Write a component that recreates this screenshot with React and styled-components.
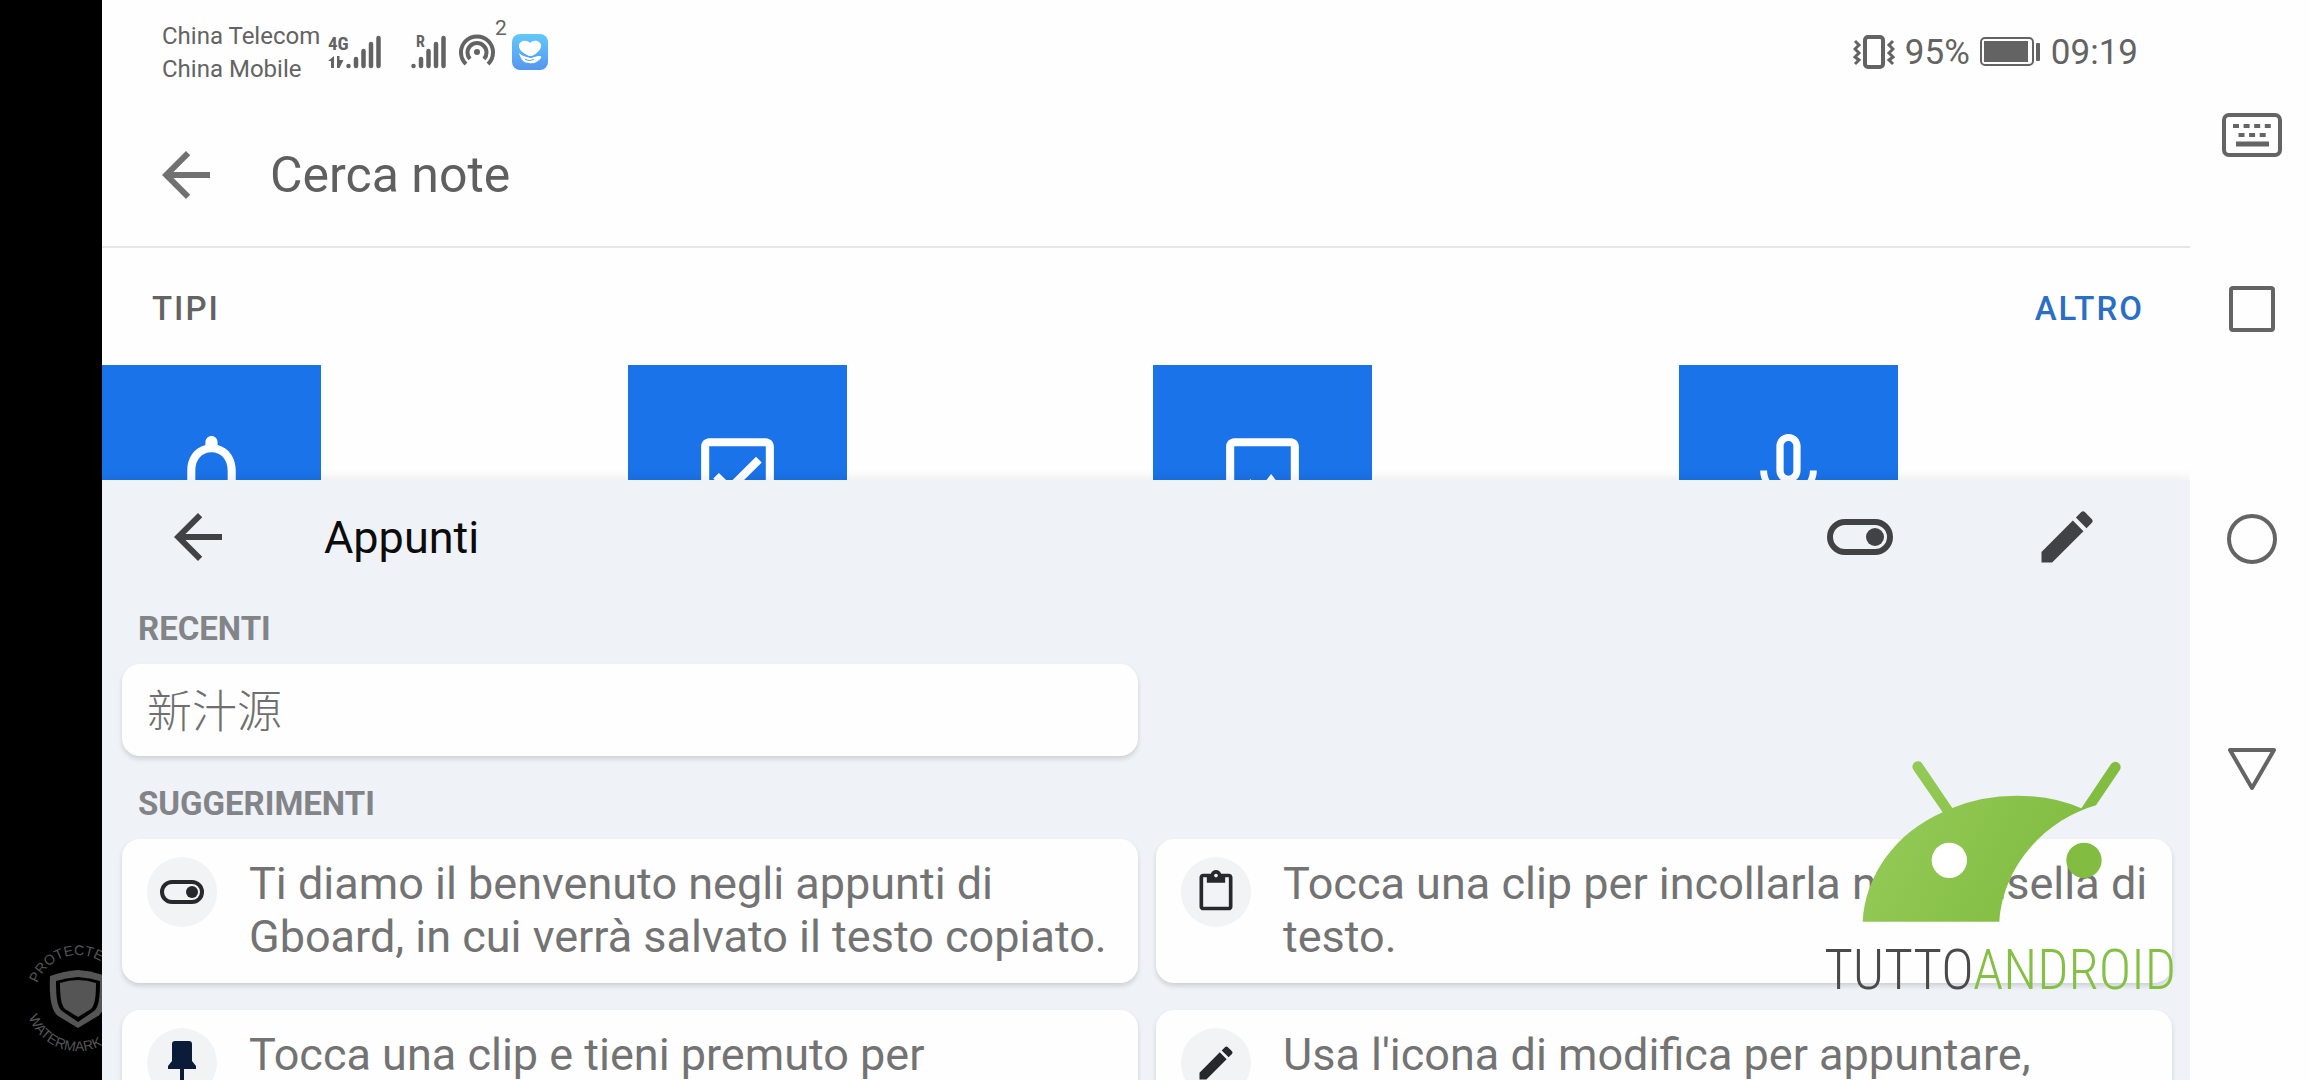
import React from "react"
import styled, { createGlobalStyle } from "styled-components"
import {
    MdArrowBack,
    MdContentPaste,
    MdEdit,
    MdMicNone,
    MdNotificationsNone,
    MdOutlineCheckBox,
    MdOutlineImage,
} from "react-icons/md"

const types = [
    { label: "Promemoria", Icon: MdNotificationsNone },
    { label: "Elenchi", Icon: MdOutlineCheckBox },
    { label: "Immagini", Icon: MdOutlineImage },
    { label: "Voce", Icon: MdMicNone },
]

const ToggleIcon = ({ width, height }) => (
    <svg width={width} height={height} viewBox="0 0 66 36" aria-hidden="true">
        <rect x="3" y="3" width="60" height="30" rx="15" fill="none" stroke="currentColor" strokeWidth="6" />
        <circle cx="48" cy="18" r="9" fill="currentColor" />
    </svg>
)

const PinIcon = () => (
    <svg width="28" height="44" viewBox="0 0 28 44" aria-hidden="true">
        <path d="M7 0h14q3 0 3 3v17l4 5v3H16v13l-2 3-2-3V28H0v-3l4-5V3q0-3 3-3z" fill="#0b1c38" />
    </svg>
)

const suggestions = [
    { icon: <ToggleIcon width={44} height={24} />, text: "Ti diamo il benvenuto negli appunti di Gboard, in cui verrà salvato il testo copiato." },
    { icon: <MdContentPaste size={44} />, text: "Tocca una clip per incollarla nella casella di testo." },
    { icon: <PinIcon />, text: "Tocca una clip e tieni premuto per aggiungerla." },
    { icon: <MdEdit size={44} />, text: "Usa l'icona di modifica per appuntare, aggiungere o eliminare le clip." },
]

const SignalBars = () => (
    <g fill="none" stroke="currentColor" strokeWidth="4.500" strokeLinecap="round">
        <path d="M2.500 31v.1M10 24v7M17.500 16v15M25 9v22M32.500 3v28" />
    </g>
)

const Signal4G = () => (
    <svg width="55" height="34" viewBox="0 0 55 34" aria-hidden="true">
        <SvgLabel x="0" y="15" fontSize="19">4G</SvgLabel>
        <path d="M0 26l6-5v12H3v-7zM9 21h2.500v4h4l-4 8H9z" fill="currentColor" />
        <g transform="translate(18 0)"><SignalBars /></g>
    </svg>
)

const SignalRoaming = () => (
    <svg width="36" height="34" viewBox="0 0 36 34" aria-hidden="true">
        <SvgLabel x="5" y="12" fontSize="16">R</SvgLabel>
        <SignalBars />
    </svg>
)

const HotspotIcon = () => (
    <svg width="36" height="36" viewBox="0 0 36 36" aria-hidden="true">
        <circle cx="18" cy="18" r="3" fill="currentColor" />
        <path d="M11 25a9.500 9.500 0 1 1 14 0M7 30a16 16 0 1 1 22 0" fill="none" stroke="currentColor" strokeWidth="4" />
    </svg>
)

const HealthIcon = () => (
    <svg width="36" height="36" viewBox="0 0 36 36" aria-hidden="true">
        <defs>
            <linearGradient id="health" x1="0" y1="0" x2="0" y2="1">
                <stop offset="0" stopColor="#62c8fa" />
                <stop offset="1" stopColor="#5596ee" />
            </linearGradient>
        </defs>
        <rect width="36" height="36" rx="8" fill="url(#health)" />
        <path d="M17 22C11 19 7 16 7 12c0-5 7-7 11-3 4-4 11-2 11 3 0 4-5 8-9 10z" fill="#fff" />
        <path d="M7 19c3 3 8 4 12 5l7-2c2 0 4 0 3 2-3 4-7 6-12 5-5 0-8-3-10-10z" fill="#fff" />
        <path d="M8 19c3 3 7 3 10 4l4-1M13 25c3 2 6 2 9 0" fill="none" stroke="#5aa2f1" strokeWidth="1" />
    </svg>
)

const VibrateIcon = () => (
    <svg width="42" height="34" viewBox="0 0 42 34" fill="none" stroke="currentColor" aria-hidden="true">
        <rect x="12" y="2" width="18" height="30" rx="3" strokeWidth="4" />
        <path d="M2 6l4 4-4 4 4 4-4 4 4 3-4 4M40 6l-4 4 4 4-4 4 4 4-4 3 4 4" strokeWidth="3" />
    </svg>
)

const BatteryIcon = () => (
    <svg width="61" height="30" viewBox="0 0 61 30" aria-hidden="true">
        <rect x="1" y="1" width="52" height="27" rx="4" fill="none" stroke="currentColor" strokeWidth="2" />
        <rect x="4" y="4" width="44" height="21" fill="currentColor" />
        <rect x="56" y="6" width="4" height="18" rx="1" fill="currentColor" />
    </svg>
)

const KeyboardIcon = () => (
    <svg width="60" height="44" viewBox="0 0 60 44" aria-hidden="true">
        <rect x="2" y="2" width="56" height="40" rx="5" fill="none" stroke="currentColor" strokeWidth="4" />
        <path d="M11 13h38" stroke="currentColor" strokeWidth="4" strokeDasharray="6 4.600" />
        <path d="M16.500 22h28" stroke="currentColor" strokeWidth="4" strokeDasharray="6 4.600" />
        <path d="M14 31h33" stroke="currentColor" strokeWidth="5" />
    </svg>
)

const ShieldMark = () => (
    <svg width="108" height="108" viewBox="0 0 108 108" aria-hidden="true">
        <defs>
            <path id="arcTop" d="M13.600 39.300A43 43 0 0 1 94.400 39.300" />
            <path id="arcBottom" d="M4.500 73.100A53 53 0 0 0 103.500 73.100" />
        </defs>
        <path d="M54 26q14 1 28 6c1 20-1 35-8 40L54 84 34 72c-7-5-9-20-8-40q14-5 28-6z" fill="#555" />
        <path d="M54 33q12 1 22 4c0 16-1 26-6 30L54 78 38 67c-5-4-6-14-6-30q10-3 22-4z" fill="#000" />
        <path d="M54 36q9 0 18 3c0 13-1 22-5 26L54 73 41 65c-4-4-5-13-5-26q9-3 18-3z" fill="#555" />
        <RingText><textPath href="#arcTop">PROTECTED</textPath></RingText>
        <RingText><textPath href="#arcBottom">WATERMARK</textPath></RingText>
    </svg>
)

const RobotHead = () => (
    <RobotSvg width="260" height="161" viewBox="256 61 780 483" aria-hidden="true">
        <defs>
            <linearGradient id="leaf" gradientUnits="userSpaceOnUse" x1="340" y1="240" x2="800" y2="480">
                <stop offset="0" stopColor="#93c956" />
                <stop offset="1" stopColor="#82bd42" />
            </linearGradient>
        </defs>
        <path
            fill="url(#leaf)"
            d="M258 543C266 400 360 275 498 215L410 87A16 16 0 0 1 437 69L527 202Q615 165 720 165Q830 165 914 203L1003 70A16 16 0 0 1 1030 87L958 194C800 240 678 380 668 543Z"
        />
        <circle cx="518" cy="359" r="53" fill="#fff" />
        <circle cx="922" cy="359" r="53" fill="#82bd42" />
    </RobotSvg>
)

const App = () => {
    return (
        <>
            <GlobalStyle />
            <Screen>
                <Notch><ShieldMark /></Notch>
                <Main>
                    <StatusBar>
                        <Carriers>
                            <span>China Telecom</span>
                            <span>China Mobile</span>
                        </Carriers>
                        <StatusIcons>
                            <Signal4G />
                            <Roaming><SignalRoaming /></Roaming>
                            <HotspotIcon />
                            <Devices>2</Devices>
                            <HealthIcon />
                        </StatusIcons>
                        <StatusRight>
                            <VibrateIcon />
                            <span>95%</span>
                            <BatteryIcon />
                            <span>09:19</span>
                        </StatusRight>
                    </StatusBar>
                    <SearchBar>
                        <IconButton aria-label="Indietro" $color="#717171"><MdArrowBack size={72} /></IconButton>
                        <SearchInput type="text" aria-label="Cerca note" placeholder="Cerca note" />
                    </SearchBar>
                    <TypesHeader>
                        <TypesTitle>TIPI</TypesTitle>
                        <MoreLink href="#altro">ALTRO</MoreLink>
                    </TypesHeader>
                    <TypesRow>
                        {types.map(({ label, Icon }) => (
                            <TypeTile key={label} aria-label={label}><Icon size={97} /></TypeTile>
                        ))}
                    </TypesRow>
                    <Clipboard>
                        <ClipboardBar>
                            <IconButton aria-label="Chiudi appunti"><MdArrowBack size={72} /></IconButton>
                            <ClipboardTitle>Appunti</ClipboardTitle>
                            <ClipboardActions>
                                <IconButton aria-label="Attiva appunti"><ToggleIcon width={66} height={36} /></IconButton>
                                <IconButton aria-label="Modifica"><MdEdit size={68} /></IconButton>
                            </ClipboardActions>
                        </ClipboardBar>
                        <SectionTitle>RECENTI</SectionTitle>
                        <CardGrid>
                            <RecentClip>新汁源</RecentClip>
                        </CardGrid>
                        <SectionTitle>SUGGERIMENTI</SectionTitle>
                        <CardGrid>
                            {suggestions.map(({ icon, text }) => (
                                <Suggestion key={text}>
                                    <Bubble>{icon}</Bubble>
                                    <p>{text}</p>
                                </Suggestion>
                            ))}
                        </CardGrid>
                    </Clipboard>
                    <Brand>
                        <RobotHead />
                        <BrandName>TUTTO<b>ANDROID</b></BrandName>
                    </Brand>
                </Main>
                <NavBar>
                    <NavButton aria-label="Tastiera"><KeyboardIcon /></NavButton>
                    <NavKeys>
                        <NavButton aria-label="Recenti">
                            <svg width="46" height="46"><rect x="2" y="2" width="42" height="42" rx="2" fill="none" stroke="currentColor" strokeWidth="4" /></svg>
                        </NavButton>
                        <NavButton aria-label="Home">
                            <svg width="50" height="50"><circle cx="25" cy="25" r="23" fill="none" stroke="currentColor" strokeWidth="4" /></svg>
                        </NavButton>
                        <NavButton aria-label="Indietro">
                            <svg width="50" height="44"><path d="M3 3h44L25 41z" fill="none" stroke="currentColor" strokeWidth="4" strokeLinejoin="round" /></svg>
                        </NavButton>
                    </NavKeys>
                </NavBar>
            </Screen>
        </>
    )
}

export default App

const GlobalStyle = createGlobalStyle`
    * {
        box-sizing: border-box;
    }
    body {
        margin: 0;
        background: #fefefe;
        font-family: Roboto, "Noto Sans CJK SC", sans-serif;
    }
    button {
        padding: 0;
        border: 0;
        background: none;
        font: inherit;
    }
    svg {
        display: block;
        flex: none;
    }
`
const Screen = styled.div`
    display: grid;
    grid-template-columns: 102px minmax(0, 1fr) 120px;
    height: 100vh;
    overflow: hidden;
`
const Notch = styled.aside`
    display: flex;
    flex-direction: column;
    justify-content: flex-end;
    padding: 0 0 28px 24px;
    overflow: hidden;
    background: #000;
`
const Main = styled.main`
    position: relative;
    display: flex;
    flex-direction: column;
    min-height: 0;
    overflow: hidden;
`
const StatusBar = styled.header`
    display: flex;
    flex: none;
    align-items: center;
    height: 104px;
    padding: 0 52px 0 60px;
    color: #636363;
`
const Carriers = styled.div`
    display: flex;
    flex-direction: column;
    width: 166px;
    padding-top: 2px;
    font-size: 24px;
    line-height: 33px;
    white-space: nowrap;
`
const StatusIcons = styled.div`
    display: flex;
    align-items: center;
`
const Roaming = styled.div`
    margin: 0 12px 0 28px;
`
const Devices = styled.sup`
    align-self: flex-start;
    margin-top: -18px;
    width: 17px;
    font-size: 21px;
    line-height: 24px;
`
const StatusRight = styled.div`
    display: flex;
    align-items: center;
    gap: 10px;
    margin-left: auto;
    font-size: 35px;
`
const SearchBar = styled.div`
    display: flex;
    flex: none;
    align-items: center;
    height: 144px;
    padding: 0 48px;
    border-bottom: 2px solid #e6e6e6;
`
const IconButton = styled.button`
    display: flex;
    align-items: center;
    color: ${props => props.$color || "#414245"};
`
const SearchInput = styled.input`
    flex: 1;
    margin-left: 48px;
    padding: 0;
    border: 0;
    outline: 0;
    background: none;
    color: #5f5f5f;
    font: 400 50px Roboto, sans-serif;
    &::placeholder {
        color: #5f5f5f;
        opacity: 1;
    }
`
const TypesHeader = styled.div`
    display: flex;
    flex: none;
    align-items: center;
    justify-content: space-between;
    height: 117px;
    padding: 4px 46px 0 50px;
    font-size: 33px;
    font-weight: 500;
    letter-spacing: 2px;
`
const TypesTitle = styled.h2`
    margin: 0;
    color: #636363;
    font: inherit;
`
const MoreLink = styled.a`
    color: #2a6fc4;
    text-decoration: none;
`
const TypesRow = styled.div`
    display: grid;
    flex: none;
    grid-template-columns: repeat(4, 1fr);
    column-gap: 14px;
    height: 115px;
    overflow: hidden;
`
const TypeTile = styled.button`
    display: flex;
    align-items: center;
    justify-content: center;
    width: 219px;
    height: 219px;
    background: #1a73e8;
    color: #fff;
`
const Clipboard = styled.section`
    position: relative;
    flex: 1;
    min-height: 0;
    padding: 0 18px 0 20px;
    background: #eff2f7;
    box-shadow: 0 0 12px rgba(0, 0, 0, 0.1);
`
const ClipboardBar = styled.div`
    display: flex;
    align-items: center;
    height: 114px;
    padding: 0 71px 0 40px;
`
const ClipboardTitle = styled.h1`
    margin: 0 0 0 90px;
    color: #0c0c0c;
    font-size: 45px;
    font-weight: 400;
`
const ClipboardActions = styled.div`
    display: flex;
    align-items: center;
    gap: 140px;
    margin-left: auto;
`
const SectionTitle = styled.h2`
    margin: 0;
    padding: 16px;
    color: #828488;
    font-size: 33px;
    font-weight: 700;
    line-height: 38px;
`
const CardGrid = styled.div`
    display: grid;
    grid-template-columns: 1fr 1fr;
    gap: 27px 18px;
    margin-bottom: 13px;
`
const RecentClip = styled.button`
    height: 92px;
    padding: 0 25px 4px;
    border-radius: 18px;
    background: #fefefe;
    box-shadow: 0 3px 5px rgba(0, 0, 0, 0.14);
    color: #6f6f6f;
    font-size: 45px;
    font-weight: 300;
    text-align: left;
`
const Suggestion = styled.article`
    display: flex;
    align-items: flex-start;
    gap: 32px;
    min-height: 144px;
    padding: 18px 20px 20px 25px;
    border-radius: 18px;
    background: #fefefe;
    box-shadow: 0 3px 5px rgba(0, 0, 0, 0.14);
    color: #737373;
    font-size: 45px;
    line-height: 53px;
    p {
        margin: 0;
    }
`
const Bubble = styled.span`
    display: flex;
    flex: none;
    align-items: center;
    justify-content: center;
    width: 70px;
    height: 70px;
    border-radius: 50%;
    background: #f1f3f5;
    color: #26282c;
`
const Brand = styled.div`
    position: absolute;
    right: 14px;
    bottom: 76px;
    display: flex;
    flex-direction: column;
    gap: 14px;
`
const RobotSvg = styled.svg`
    margin-left: 38px;
`
const BrandName = styled.div`
    color: #4a4a4a;
    font-family: "Roboto Condensed", "Open Sans Condensed", "Liberation Sans Narrow", Roboto, sans-serif;
    font-size: 55px;
    font-weight: 300;
    line-height: 68px;
    white-space: nowrap;
    b {
        color: #84c044;
        font-weight: 300;
    }
`
const NavBar = styled.nav`
    display: flex;
    flex-direction: column;
    align-items: center;
    gap: 114px;
    padding: 105px 0 0 4px;
    color: #646464;
`
const NavKeys = styled.div`
    display: flex;
    flex-direction: column;
    gap: 170px;
`
const NavButton = styled.button`
    display: flex;
    align-items: center;
    justify-content: center;
    width: 60px;
    height: 60px;
    color: inherit;
`
const SvgLabel = styled.text`
    fill: currentColor;
    font-family: "Roboto Condensed", "Liberation Sans Narrow", Roboto, sans-serif;
    font-weight: 700;
`
const RingText = styled.text`
    fill: #555;
    font-family: "Liberation Sans", sans-serif;
    font-size: 14px;
`
